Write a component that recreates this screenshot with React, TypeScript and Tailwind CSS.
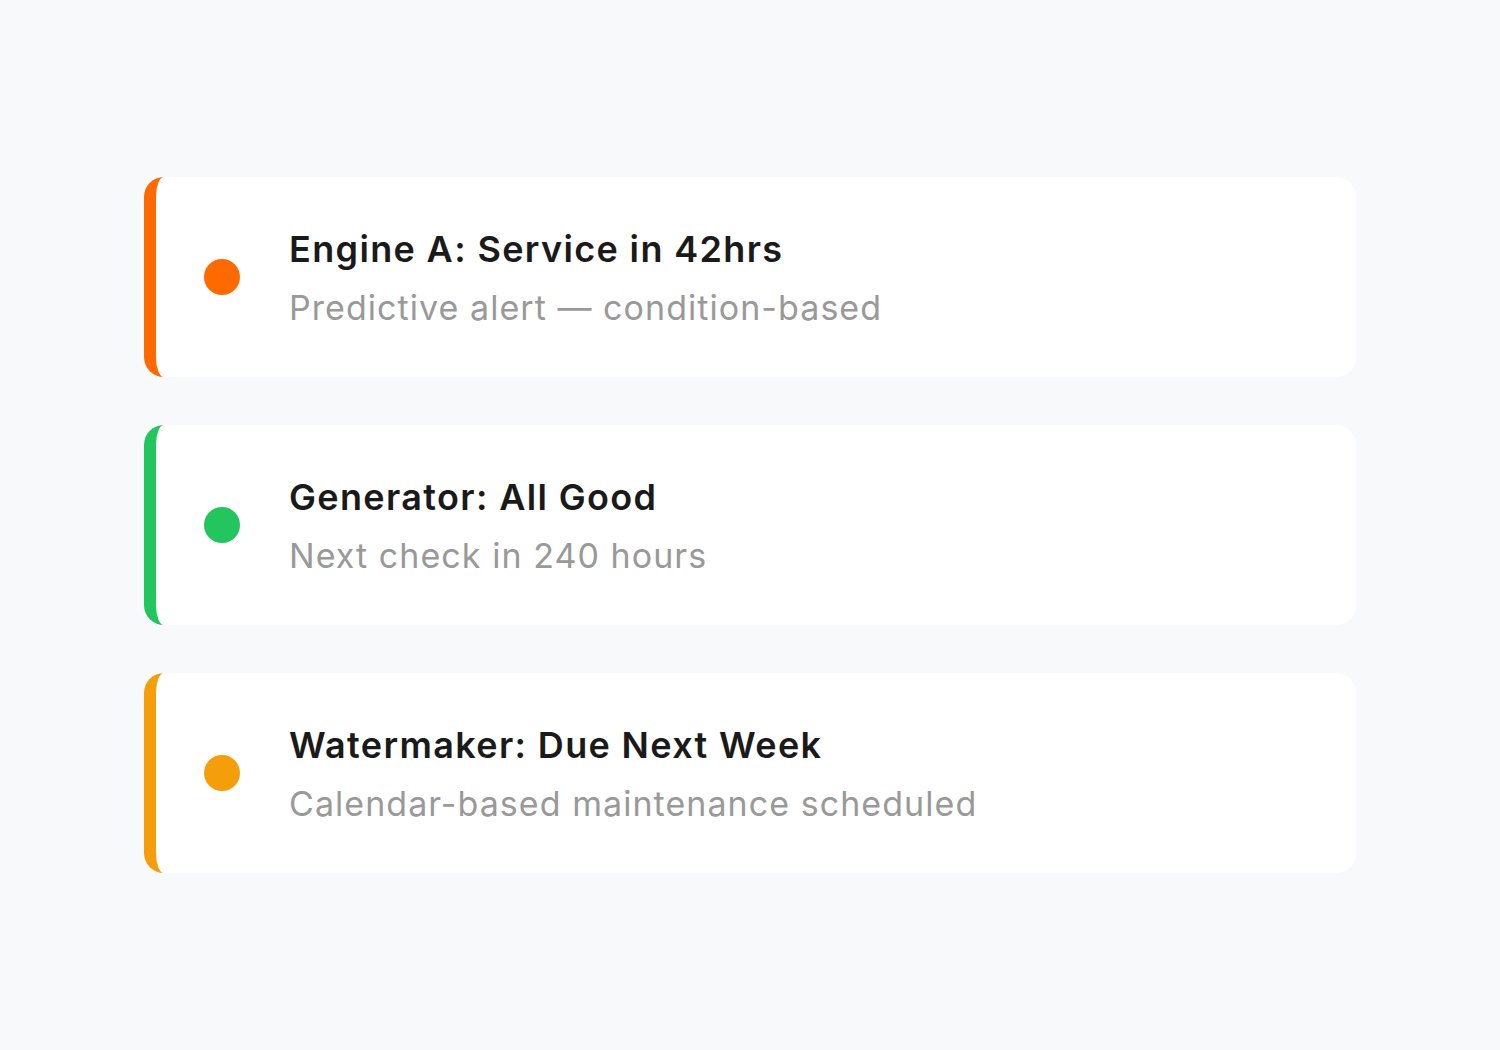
const items = [
  {
    title: 'Engine A: Service in 42hrs',
    subtitle: 'Predictive alert — condition-based',
    border: 'border-[#ff6a00]',
    dot: 'bg-[#ff6a00]',
  },
  {
    title: 'Generator: All Good',
    subtitle: 'Next check in 240 hours',
    border: 'border-[#22c55e]',
    dot: 'bg-[#22c55e]',
  },
  {
    title: 'Watermaker: Due Next Week',
    subtitle: 'Calendar-based maintenance scheduled',
    border: 'border-[#f59e0b]',
    dot: 'bg-[#f59e0b]',
  },
];

export default function App() {
  return (
    <div
      className="flex min-h-screen items-center justify-center bg-[#f8f9fa]"
      style={{ fontFamily: 'Inter, "Noto Sans", sans-serif' }}
    >
      <div className="flex w-[1212px] flex-col gap-12">
        {items.map((item) => (
          <div
            key={item.title}
            className={`flex h-[200px] items-center rounded-[20px] border-l-[12px] bg-white pl-12 ${item.border}`}
          >
            <span className={`h-9 w-9 shrink-0 rounded-full ${item.dot}`} />
            <div className="ml-[49px] flex flex-col">
              <div className="text-[36px] font-semibold leading-[44px] tracking-[1.35px] text-[#1a1a1a]">
                {item.title}
              </div>
              <div className="mt-[17px] text-[34px] leading-[40px] tracking-[1.05px] text-[#999999]">
                {item.subtitle}
              </div>
            </div>
          </div>
        ))}
      </div>
    </div>
  );
}
